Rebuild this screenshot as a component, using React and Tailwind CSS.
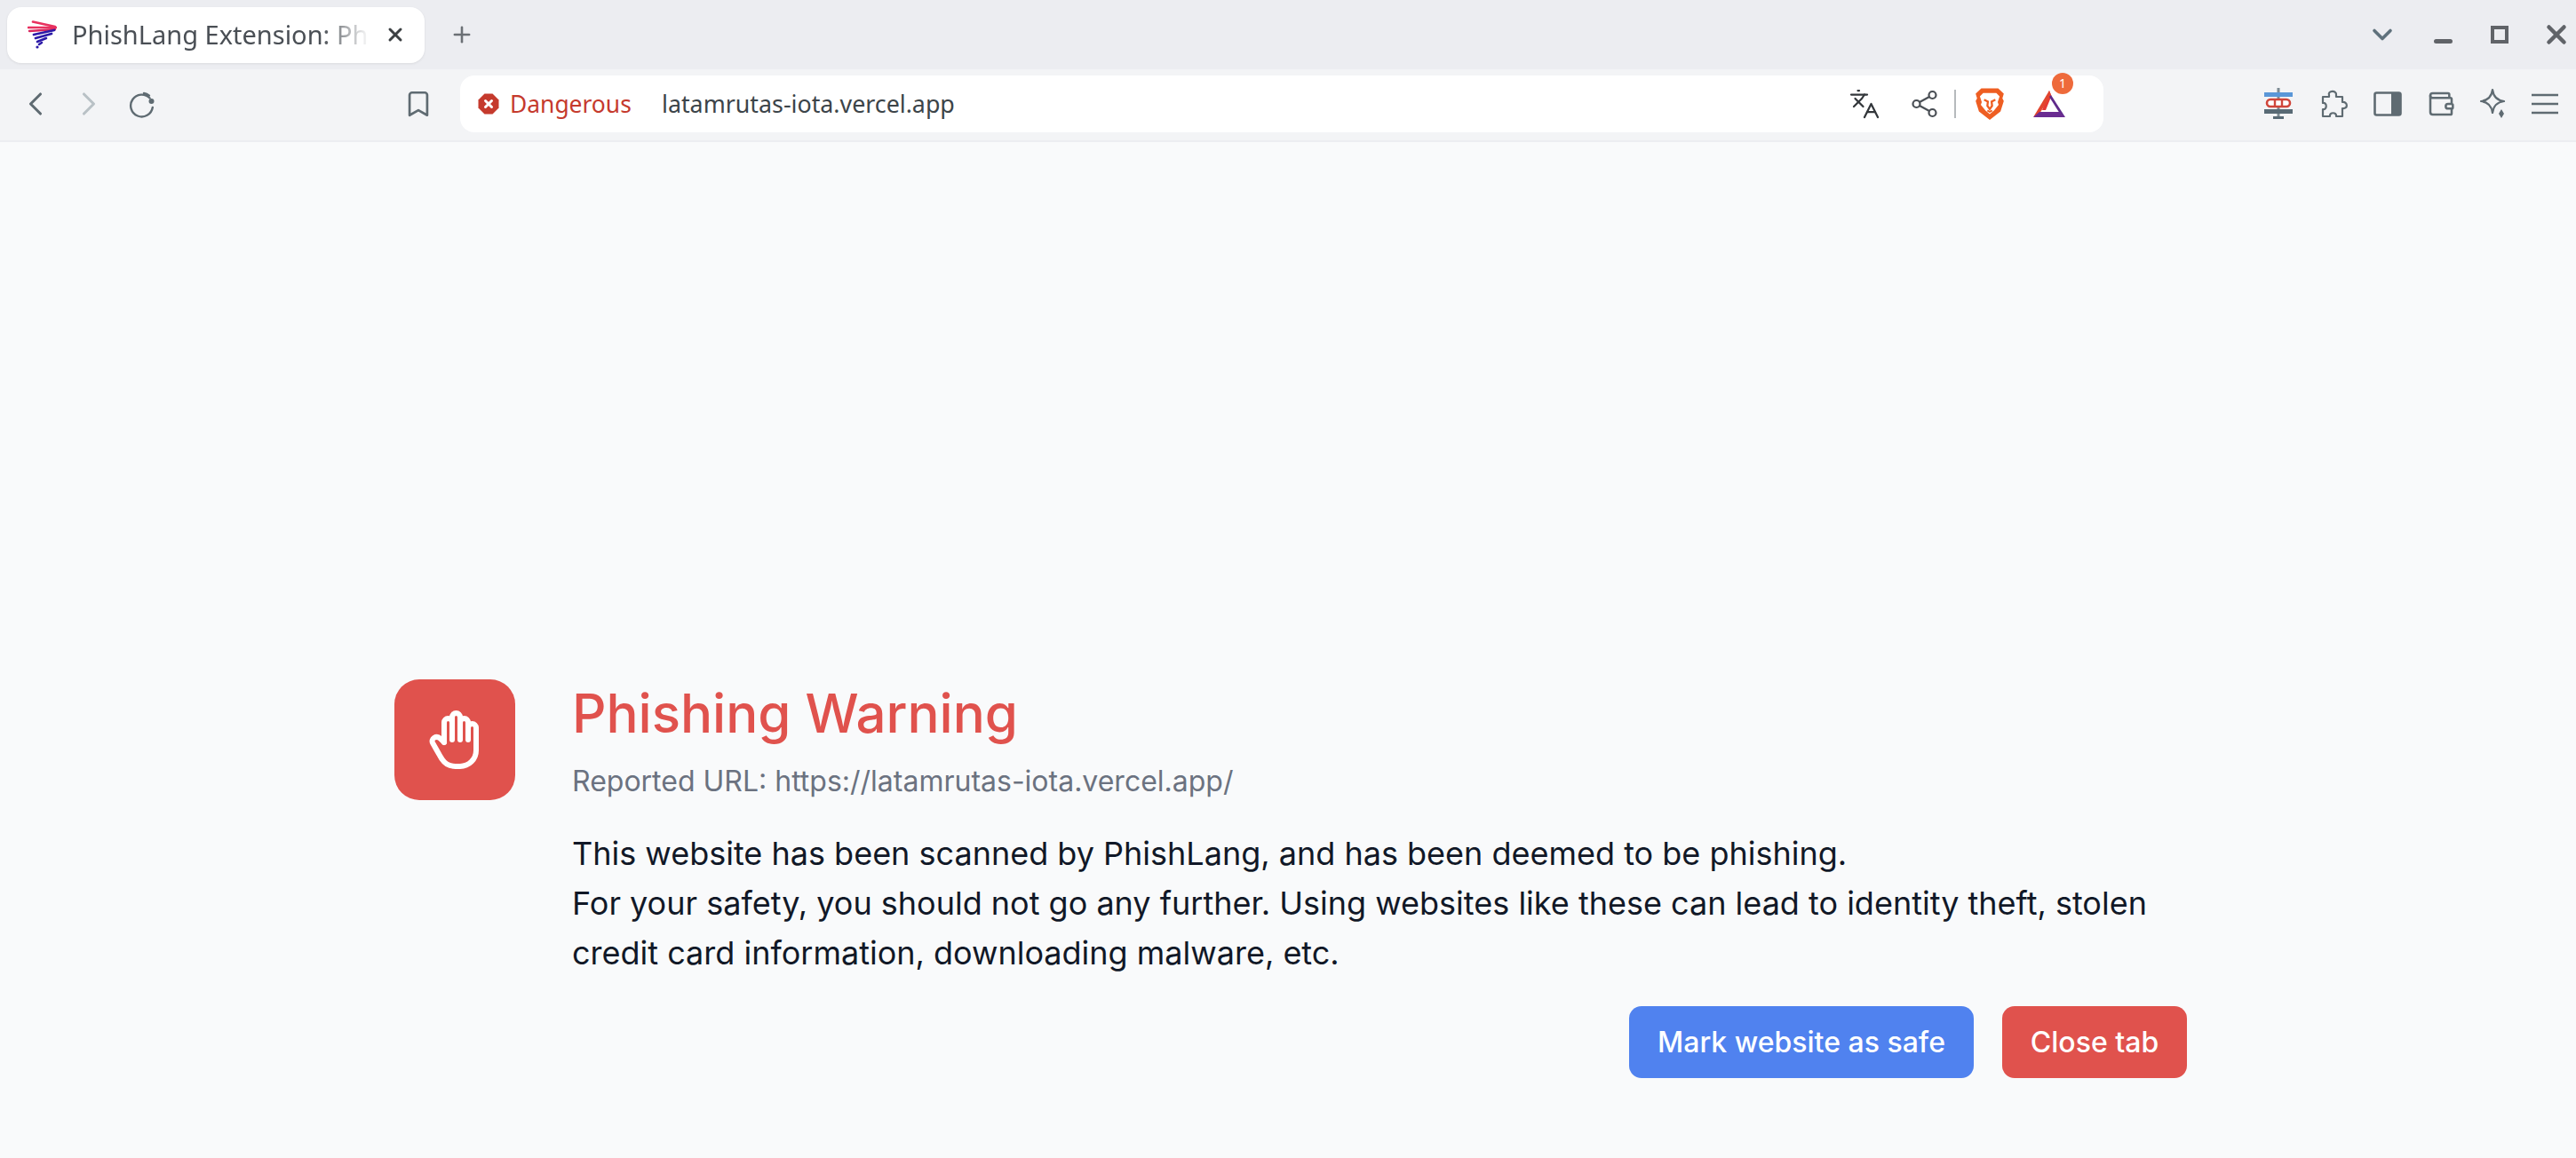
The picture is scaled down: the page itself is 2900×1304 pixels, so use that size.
import { ChevronDown, ChevronLeft, ChevronRight, Plus, X, Bookmark, Languages, Wallet } from 'lucide-react';
import { TbHandStop } from 'react-icons/tb';

// Tab favicon, stacked brush strokes
const Favicon = () => (
  <svg width="33" height="32" viewBox="0 0 33 32" fill="none" strokeLinecap="round">
    <path d="M6 1.5 L31 7" stroke="#e8315f" strokeWidth="2.6" />
    <path d="M1 8 L32 8" stroke="#e8315f" strokeWidth="2.6" />
    <path d="M2 12 L31 10" stroke="#d8285f" strokeWidth="2.4" />
    <path d="M30 11 L7 16" stroke="#2c1aa8" strokeWidth="2.8" />
    <path d="M27 15 L9 20" stroke="#2c1aa8" strokeWidth="2.8" />
    <path d="M21 20 L11 24" stroke="#2c1aa8" strokeWidth="2.6" />
    <path d="M16 25 L13 27" stroke="#2c1aa8" strokeWidth="2.6" />
    <circle cx="11" cy="30" r="1.6" fill="#2c1aa8" />
  </svg>
);

const Reload = () => (
  <svg width="32" height="32" viewBox="0 0 32 32" fill="none" stroke="#5f6b72" strokeWidth="2.4" strokeLinecap="round">
    <path d="M24.6 9.5 A12.4 12.4 0 1 0 27.8 20" />
    <path d="M18 4 A12.4 12.4 0 0 1 24 6.6" stroke="#5f6b72" />
    <circle cx="26.5" cy="13" r="3" fill="#5f6b72" stroke="none" />
  </svg>
);

const DangerIcon = () => (
  <svg width="24" height="24" viewBox="0 0 24 24">
    <path d="M7.5 0.5 H16.5 L23.5 7.5 V16.5 L16.5 23.5 H7.5 L0.5 16.5 V7.5 Z" fill="#c53a2d" strokeLinejoin="round" />
    <path d="M8.5 8.5 L15.5 15.5 M15.5 8.5 L8.5 15.5" stroke="#fff" strokeWidth="3" strokeLinecap="round" />
  </svg>
);

const ShareIcon = () => (
  <svg width="30" height="34" viewBox="0 0 30 34" fill="none" stroke="#4a4f55" strokeWidth="2.2">
    <circle cx="23.5" cy="7" r="4" />
    <circle cx="5.5" cy="17" r="4" />
    <circle cx="23.5" cy="27" r="4" />
    <path d="M9 15 L20 9 M9 19 L20 25" />
  </svg>
);

const BraveLogo = () => (
  <svg width="38" height="38" viewBox="0 0 36 36">
    <path d="M9 1.5 H27 L33 7 L31.5 12 L33 15 L29.5 26 L18 35 L6.5 26 L3 15 L4.5 12 L3 7 Z" fill="#ee5e22" />
    <path d="M11 6.5 H25 L28.5 10 L26.5 16 L27.5 19 L22.5 25 L18 29 L13.5 25 L8.5 19 L9.5 16 L7.5 10 Z" fill="#fff" />
    <path d="M12 13.5 L16 15.5 L15.5 20 L18 23.5 L20.5 20 L20 15.5 L24 13.5" fill="none" stroke="#ee5e22" strokeWidth="2.2" />
    <path d="M15.5 25 L18 26.5 L20.5 25" fill="none" stroke="#ee5e22" strokeWidth="1.8" />
  </svg>
);

const BatLogo = () => (
  <svg width="38" height="34" viewBox="0 0 38 34">
    <path d="M19 2 L11 24 L15 24 L21.5 8 Z" fill="#e53935" />
    <path d="M19 2 L1 32 L8 28 L21 7 Z" fill="#e2452f" />
    <path d="M21 7 L37 32 L31 28 L19 9 Z" fill="#5e2a8a" />
    <path d="M1 32 H37 L31 26 H8 Z" fill="#6a2c91" />
  </svg>
);

// Rail ticket style extension icon
const RailIcon = () => (
  <svg width="34" height="36" viewBox="0 0 34 36">
    <rect x="15.5" y="0" width="3" height="34" fill="#7d8b93" />
    <rect x="1" y="5" width="32" height="5" fill="#5a97d8" />
    <rect x="1" y="24" width="32" height="5" fill="#586a75" />
    <rect x="11" y="32" width="12" height="3" fill="#586a75" />
    <rect x="4" y="13" width="26" height="8" rx="4" fill="#fff" stroke="#d0463b" strokeWidth="2.6" />
    <path d="M13 13 V21 M21 13 V21" stroke="#d0463b" strokeWidth="2.4" />
  </svg>
);

const PuzzleIcon = () => (
  <svg width="34" height="34" viewBox="0 0 34 34" fill="none" stroke="#5f6b72" strokeWidth="2.2" strokeLinejoin="round">
    <path d="M12 7 C10 2 21 1 20 7 L20 9 L27 9 L27 15 C33 14 34 23 27 22 L27 31 L20 31 C21 26 12 26 13 31 L5 31 L5 23 C10 24 10 15 5 16 L5 9 L12 9 Z" />
  </svg>
);

const SidebarIcon = () => (
  <svg width="32" height="28" viewBox="0 0 32 28">
    <rect x="1.5" y="1.5" width="29" height="25" rx="2" fill="none" stroke="#5f6b72" strokeWidth="2.6" />
    <rect x="20" y="1.5" width="10.5" height="25" fill="#5f6b72" />
  </svg>
);

const SparkleIcon = () => (
  <svg width="30" height="36" viewBox="0 0 30 36" fill="none" stroke="#5f6b72" strokeWidth="2.2" strokeLinejoin="round">
    <path d="M14 2 C15 10 19 14 27 15 C19 16 15 20 14 28 C13 20 9 16 1 15 C9 14 13 10 14 2 Z" />
    <path d="M24 24 L27 29 L24 34 L21 29 Z" fill="#5f6b72" stroke="none" />
  </svg>
);

const MenuIcon = () => (
  <svg width="30" height="26" viewBox="0 0 30 26" fill="none" stroke="#5f6b72" strokeWidth="2.6">
    <path d="M0 3 H30 M0 13 H30 M0 23 H30" />
  </svg>
);

function TabStrip() {
  return (
    <div className="flex h-[78px] items-center bg-[#ecedf1] font-['Noto_Sans',sans-serif]">
      <div className="ml-2 flex h-[63px] w-[470px] items-center rounded-[16px] bg-white pl-[23px] pr-[21px] shadow-[0_1px_3px_rgba(0,0,0,0.08)]">
        <Favicon />
        <div className="ml-[17px] w-[335px] whitespace-nowrap text-[29px] leading-[44px] text-[#4a4f55] overflow-hidden [mask-image:linear-gradient(to_right,black_84%,transparent)]">
          PhishLang Extension: Phishing
        </div>
        <X size={24} strokeWidth={3} className="ml-auto text-[#3c4043]" />
      </div>
      <Plus size={28} strokeWidth={2.2} className="ml-[28px] text-[#6b7075]" />
      <ChevronDown size={36} strokeWidth={2.4} className="ml-auto text-[#5f717c]" />
      <div className="ml-[40px] mt-[14px] h-[5px] w-[21px] rounded-sm bg-[#606368]" />
      <div className="ml-[43px] h-[20px] w-[20px] border-[4px] border-[#606368]" />
      <X size={34} strokeWidth={3.2} className="ml-[37px] mr-[5px] text-[#606368]" />
    </div>
  );
}

function Toolbar() {
  return (
    <div className="flex h-[82px] items-center border-b-2 border-[#ecedf1] bg-[#f3f4f6] pb-[2px] font-['Noto_Sans',sans-serif]">
      <ChevronLeft size={44} strokeWidth={1.7} className="ml-[18px] text-[#5f6b72]" />
      <ChevronRight size={44} strokeWidth={1.7} className="ml-[16px] text-[#b9c1c6]" />
      <div className="ml-[22px]"><Reload /></div>
      <Bookmark size={34} strokeWidth={1.9} className="ml-[278px] text-[#5f6b72]" />
      <div className="ml-[30px] flex h-[64px] w-[1850px] items-center rounded-[16px] bg-white pl-5">
        <DangerIcon />
        <span className="ml-[12px] w-[171px] text-[26.4px] leading-none text-[#c53a2d]">Dangerous</span>
        <span className="text-[26.8px] leading-none text-[#3c4449]">latamrutas-iota.vercel.app</span>
        <Languages size={36} strokeWidth={1.5} className="ml-auto text-[#33373b]" />
        <div className="ml-[35px]"><ShareIcon /></div>
        <div className="ml-[18px] h-[32px] w-[2px] bg-[#b6babd]" />
        <div className="ml-[19px]"><BraveLogo /></div>
        <div className="relative ml-[29px] mr-[42px]">
          <BatLogo />
          <span className="absolute right-[-8px] top-[-18px] flex h-[24px] w-[24px] items-center justify-center rounded-full bg-[#ee6a3b] text-[14px] leading-none text-white">1</span>
        </div>
      </div>
      <div className="ml-auto mr-5 flex items-center gap-[28px]">
        <RailIcon />
        <PuzzleIcon />
        <SidebarIcon />
        <Wallet size={32} strokeWidth={1.9} className="text-[#5f6b72]" />
        <SparkleIcon />
        <MenuIcon />
      </div>
    </div>
  );
}

export default function App() {
  return (
    <div className="flex h-[1304px] flex-col bg-[#f9fafb]">
      <TabStrip />
      <Toolbar />
      <main className="flex flex-1 items-end pb-[90px] pl-[444px] font-['Inter',sans-serif]">
        <div className="flex w-[2018px] items-start gap-[64px]">
          <div className="flex h-[136px] w-[136px] shrink-0 items-center justify-center rounded-[28px] bg-[#e0524d]">
            <TbHandStop size={72} strokeWidth={2} className="text-white" />
          </div>
          <div className="flex-1">
            <h1 className="pt-[2px] text-[60px] font-medium leading-[72px] text-[#e0524d]">Phishing Warning</h1>
            <p className="mt-[17px] text-[32px] leading-[48px] text-[#6b7280]">Reported URL: https://latamrutas-iota.vercel.app/</p>
            <p className="mt-[29px] text-[36px] leading-[56px] text-[#111827]">
              This website has been scanned by PhishLang, and has been deemed to be phishing.
              <br />
              For your safety, you should not go any further. Using websites like these can lead to identity theft, stolen credit card information, downloading malware, etc.
            </p>
            <div className="mt-[32px] flex justify-end gap-[32px]">
              <button className="h-[81px] w-[388px] rounded-[14px] bg-[#5082ef] text-[32px] font-medium text-white">Mark website as safe</button>
              <button className="h-[81px] w-[208px] rounded-[14px] bg-[#e0524d] text-[32px] font-medium text-white">Close tab</button>
            </div>
          </div>
        </div>
      </main>
    </div>
  );
}
